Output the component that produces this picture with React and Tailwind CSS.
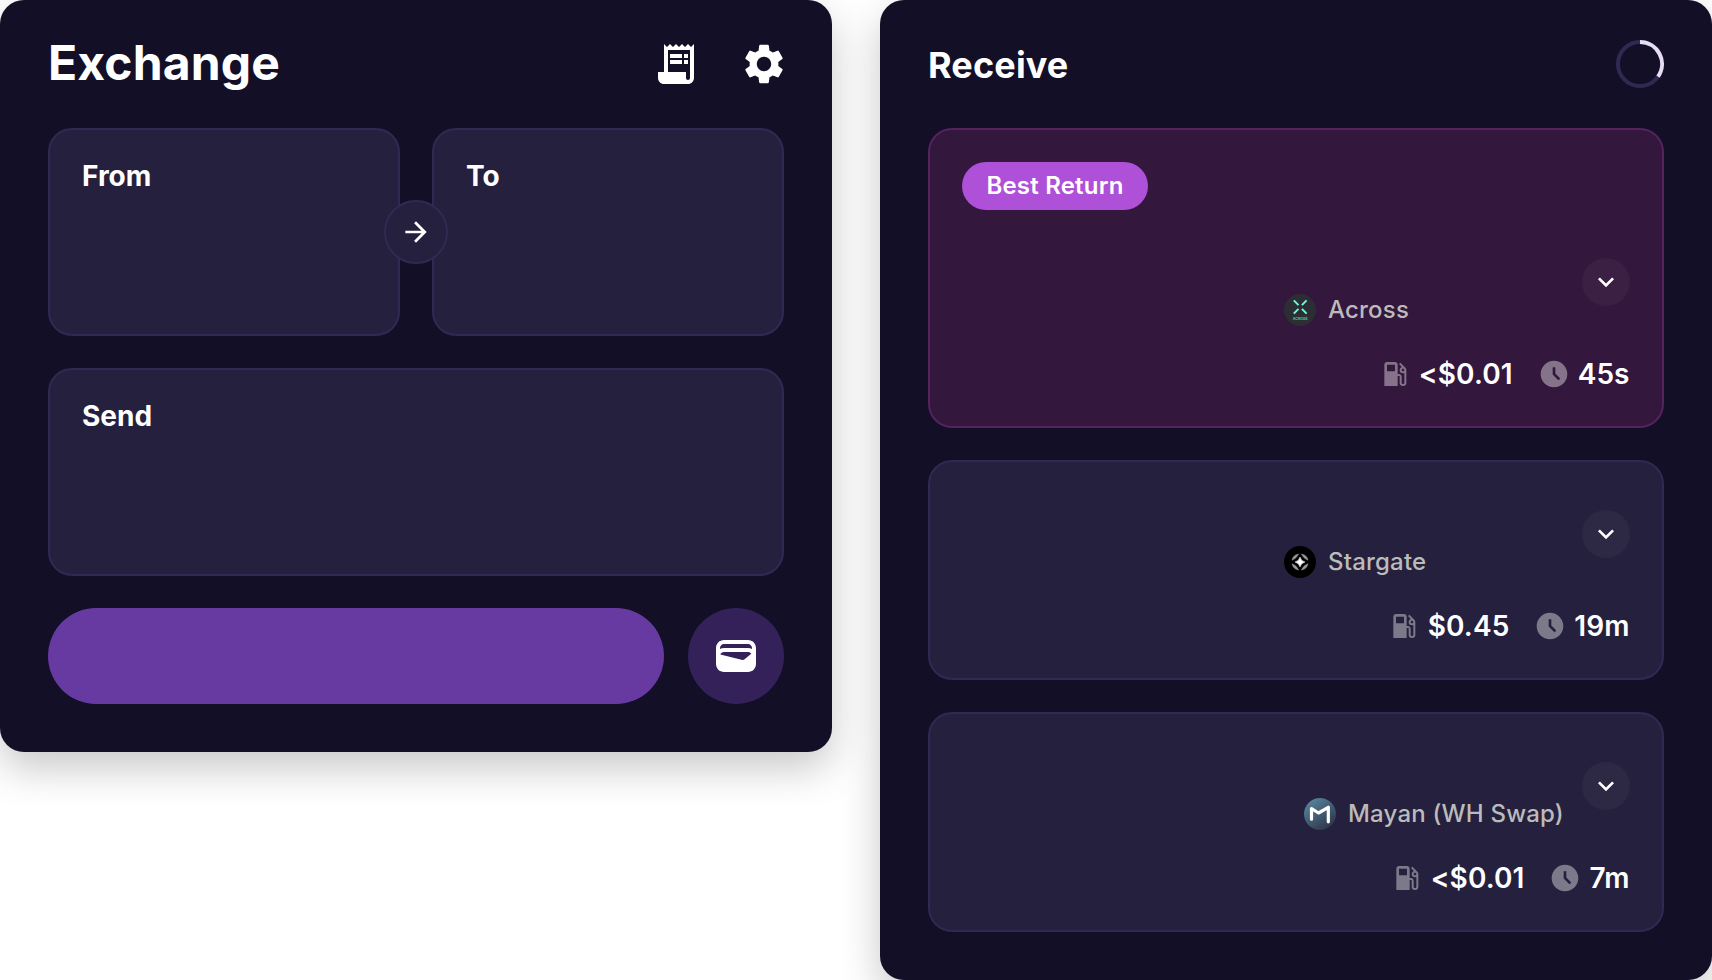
import {
  MdReceiptLong,
  MdSettings,
  MdArrowForward,
  MdExpandMore,
  MdLocalGasStation,
  MdAccessTimeFilled,
  MdWallet,
} from "react-icons/md";

const widget =
  "w-[832px] shrink-0 rounded-3xl bg-[#120f27] p-12 shadow-[0_16px_40px_rgba(0,0,0,0.22)]";
const panel = "rounded-3xl border-2 border-[#302a52] bg-[#25203d]";

function AcrossLogo() {
  return (
    <svg viewBox="0 0 32 32" className="size-8">
      <circle cx="16" cy="16" r="16" fill="#2d2e33" />
      <g stroke="#6cf9d8" strokeWidth="2">
        <path d="M9.8 6.4l4.7 4.7M22.6 6.4L17.9 11.1M9.8 19.6l4.7-4.7M22.6 19.6L17.9 14.9" />
      </g>
      <text
        x="16.2"
        y="26"
        textAnchor="middle"
        textLength="15"
        lengthAdjust="spacingAndGlyphs"
        fill="#4bb89f"
        fontSize="3.8"
        fontWeight="800"
      >
        ACROSS
      </text>
    </svg>
  );
}

function StargateLogo() {
  return (
    <svg viewBox="0 0 32 32" className="size-8">
      <circle cx="16" cy="16" r="16" fill="#000" />
      <path
        d="M16 11.2q.9 3.9 4.8 4.8q-3.9.9-4.8 4.8q-.9-3.9-4.8-4.8q3.9-.9 4.8-4.8z"
        fill="#fff"
        stroke="#fff"
        strokeWidth=".7"
      />
      <g fill="#999" stroke="#999" strokeWidth=".5">
        <path d="M14.6 8q-5.4 .8-6.6 6.2q4.4-1.6 6.6-6.2z" />
        <path d="M17.4 8q5.4 .8 6.6 6.2q-4.4-1.6-6.6-6.2z" />
        <path d="M14.6 24q-5.4-.8-6.6-6.2q4.4 1.6 6.6 6.2z" />
        <path d="M17.4 24q5.4-.8 6.6-6.2q-4.4 1.6-6.6 6.2z" />
      </g>
    </svg>
  );
}

function MayanLogo() {
  return (
    <svg viewBox="0 0 32 32" className="size-8">
      <defs>
        <linearGradient id="mayan" x1="0.2" y1="0.1" x2="0.8" y2="0.95">
          <stop offset="0" stopColor="#56809a" />
          <stop offset="1" stopColor="#2d3548" />
        </linearGradient>
      </defs>
      <circle cx="16" cy="16" r="16" fill="url(#mayan)" />
      <path
        d="M7.5 21.2V10.5L14.5 15L24.3 9.3V23.8"
        fill="none"
        stroke="#fff"
        strokeWidth="3.2"
        strokeLinecap="round"
        strokeLinejoin="round"
      />
    </svg>
  );
}

function Route({ best, logo, name, nameClass, fee, time }) {
  return (
    <section
      className={
        best
          ? "flex h-[300px] flex-col rounded-3xl border-2 border-[#55235f] bg-[#33173c] p-8"
          : "flex h-[220px] flex-col rounded-3xl border-2 border-[#302a52] bg-[#25203d] p-8"
      }
    >
      {best && (
        <span className="mb-8 flex h-12 w-[186px] items-center justify-center rounded-full bg-[#ae50d8] text-2xl font-semibold tracking-[0.2px] text-white">
          Best Return
        </span>
      )}
      <div className="flex h-20 items-start justify-end pt-4">
        <div className={nameClass}>
          {logo}
          <span className="text-2xl font-medium leading-8 tracking-[0.2px] whitespace-nowrap text-[#bbb]">
            {name}
          </span>
        </div>
        <button className="flex size-12 items-center justify-center rounded-full bg-white/[0.04] text-white">
          <MdExpandMore className="size-8" />
        </button>
      </div>
      <div className="mt-auto flex h-10 items-center justify-end pr-[0.4px] text-[28px] font-semibold leading-10 tracking-[0.1px] text-white">
        <MdLocalGasStation className="mr-2 size-8 text-white/40" />
        <span>{fee}</span>
        <MdAccessTimeFilled className="mr-2 ml-[25px] size-8 text-white/40" />
        <span>{time}</span>
      </div>
    </section>
  );
}

export default function App() {
  return (
    <main className="flex h-[980px] w-[1712px] items-start gap-12 overflow-hidden bg-white font-['Inter',sans-serif]">
      <div className={widget}>
        <header className="-mr-1 flex h-8 items-center justify-between">
          <h1 className="pb-0.5 text-5xl font-bold tracking-[0.15px] text-white">Exchange</h1>
          <div className="flex gap-10 text-white">
            <MdReceiptLong className="size-12" />
            <MdSettings className="size-12" />
          </div>
        </header>
        <div className="relative mt-12 grid grid-cols-2 gap-8">
          <section className={`${panel} h-52 px-8 py-[26px]`}>
            <h2 className="text-[28px] font-bold leading-10 text-white">From</h2>
          </section>
          <section className={`${panel} h-52 px-8 py-[26px]`}>
            <h2 className="text-[28px] font-bold leading-10 text-white">To</h2>
          </section>
          <button className="absolute top-[72px] left-[336px] flex size-16 items-center justify-center rounded-full border-2 border-[#302a52] bg-[#25203d] text-white">
            <MdArrowForward className="size-8" />
          </button>
        </div>
        <section className={`${panel} mt-8 h-52 px-8 py-[26px]`}>
          <h2 className="text-[28px] font-bold leading-10 text-white">Send</h2>
        </section>
        <div className="mt-8 flex gap-6">
          <button aria-label="Review" className="h-24 flex-1 rounded-full bg-[#673aa2]" />
          <button className="flex size-24 items-center justify-center rounded-full bg-[#35215a] text-white">
            <MdWallet className="size-12" />
          </button>
        </div>
      </div>

      <div className={`${widget} h-[980px]`}>
        <header className="flex h-8 items-center justify-between">
          <h2 className="pt-0.5 text-4xl font-bold tracking-[0.15px] text-white">Receive</h2>
          <svg viewBox="0 0 48 48" fill="none" strokeWidth="4" className="size-12">
            <circle cx="24" cy="24" r="22" stroke="#302a52" />
            <path d="M24 2A22 22 0 0 1 42.02 36.62" stroke="#e6ddf2" />
          </svg>
        </header>
        <div className="mt-12 flex flex-col gap-8">
          <Route
            best
            logo={<AcrossLogo />}
            name="Across"
            nameClass="mt-9 flex w-[298px] gap-3"
            fee="<$0.01"
            time="45s"
          />
          <Route
            logo={<StargateLogo />}
            name="Stargate"
            nameClass="mt-9 flex w-[298px] gap-3"
            fee="$0.45"
            time="19m"
          />
          <Route
            logo={<MayanLogo />}
            name="Mayan (WH Swap)"
            nameClass="mt-9 flex w-[278px] gap-3"
            fee="<$0.01"
            time="7m"
          />
        </div>
      </div>
    </main>
  );
}
